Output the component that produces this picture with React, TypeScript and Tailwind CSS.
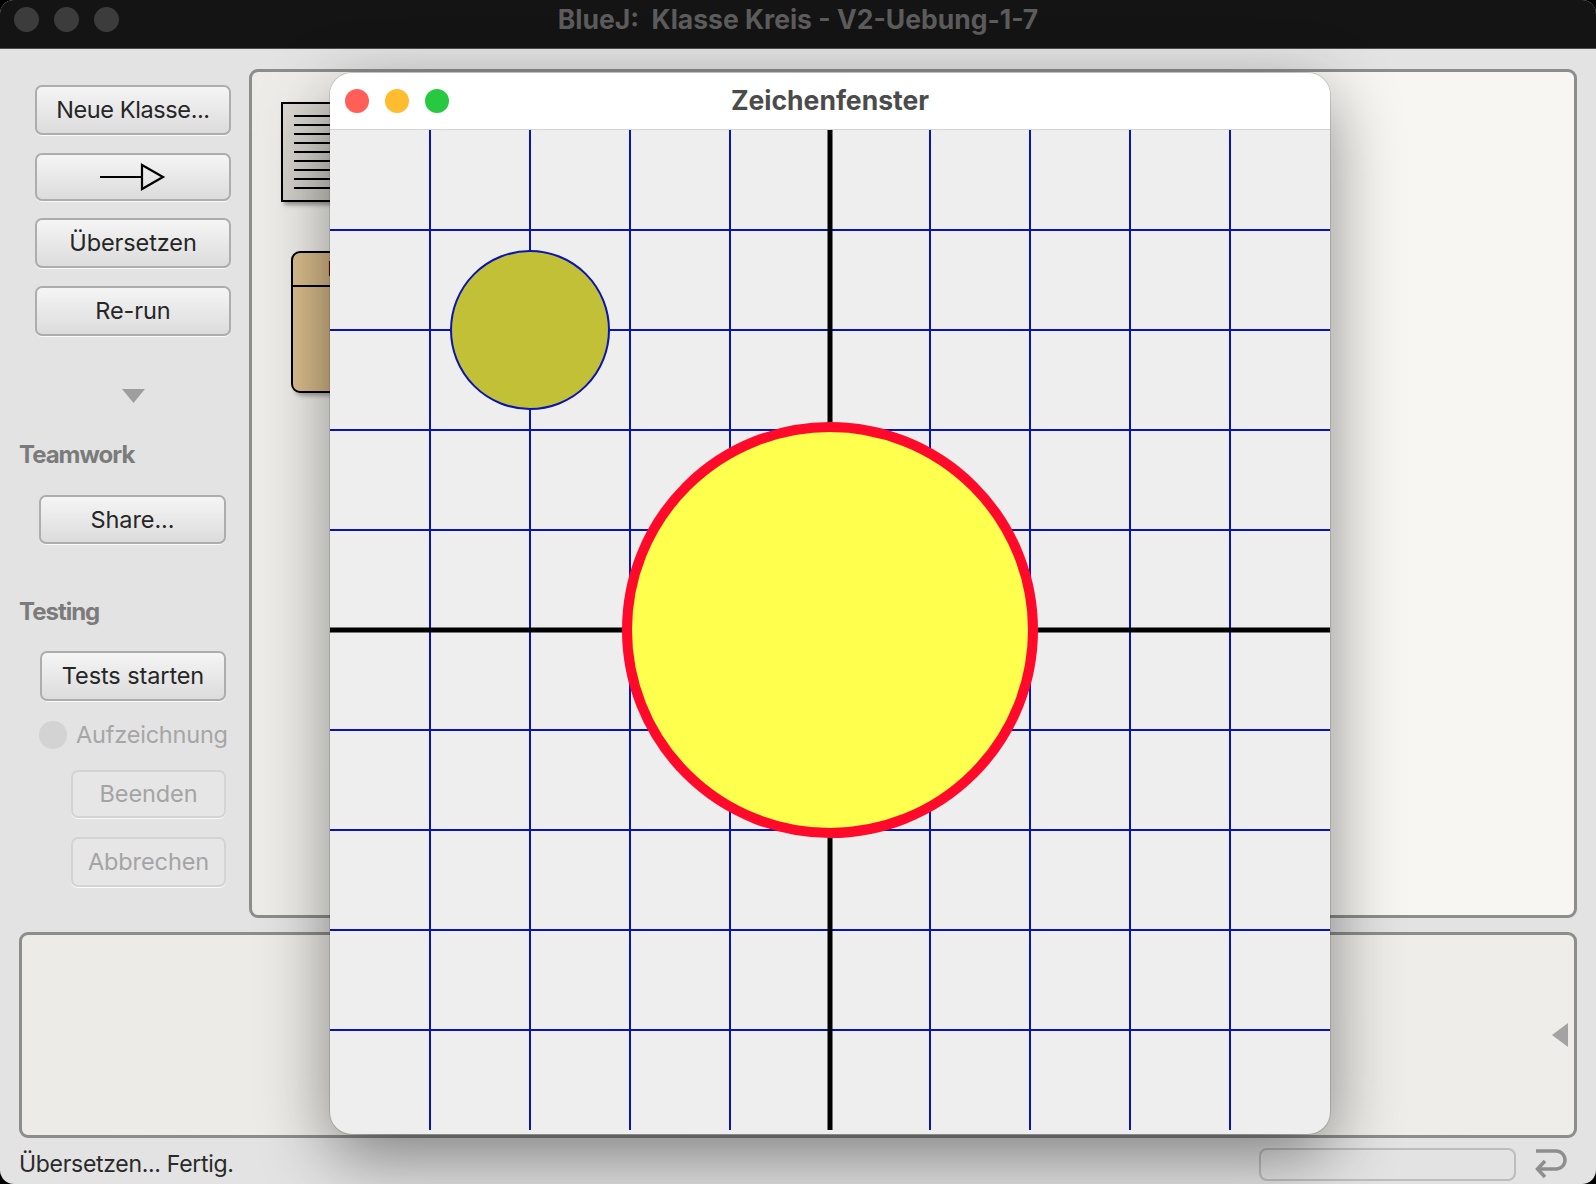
import React from "react";

function Btn({
  children,
  className,
  disabled,
}: {
  children: React.ReactNode;
  className: string;
  disabled?: boolean;
}) {
  const base =
    "flex items-center justify-center rounded-[7px] border-2 text-[23.5px] leading-none tracking-[-0.1px] shadow-[0_1px_0_rgba(255,255,255,0.8)] ";
  const look = disabled
    ? "border-[#d3d3d3] text-[#a4a4a4] bg-[#e6e6e6] "
    : "border-[#adadad] text-[#262626] bg-gradient-to-b from-[#f5f5f5] to-[#dcdcdc] ";
  return <div className={base + look + className}>{children}</div>;
}

const gridLines = [100, 200, 300, 400, 600, 700, 800, 900];

export default function App() {
  return (
    <div className="relative w-[1596px] h-[1184px] bg-black overflow-hidden font-['Inter','Noto_Sans',sans-serif]">
      <div className="flex flex-col w-full h-full bg-[#e3e3e3] rounded-[14px] overflow-hidden">
        {/* Title bar */}
        <div className="grid grid-cols-[1fr_auto_1fr] h-[49px] shrink-0 bg-[#141414] border-b border-[#4d4d4d]">
          <div className="flex gap-[15px] pl-[14px] pt-[7px]">
            <span className="w-[25px] h-[25px] rounded-full bg-[#3c3c3c]" />
            <span className="w-[25px] h-[25px] rounded-full bg-[#3c3c3c]" />
            <span className="w-[25px] h-[25px] rounded-full bg-[#3c3c3c]" />
          </div>
          <div className="pt-[4px] text-[26.5px] leading-[30px] font-bold text-[#5c5c5c] whitespace-pre tracking-[0px]">
            {"BlueJ:  Klasse Kreis - V2-Uebung-1-7"}
          </div>
          <div />
        </div>

        {/* Top row */}
        <div className="flex h-[869px] shrink-0 pt-[20px]">
          {/* Sidebar */}
          <div className="w-[249px] shrink-0 flex flex-col -mt-[20px] pt-[36px]">
            <Btn className="ml-[35px] w-[196px] h-[50px] tracking-[-0.4px]">Neue Klasse...</Btn>
            <Btn className="ml-[35px] w-[196px] h-[48px] mt-[18px]">
              <svg width="66" height="28" viewBox="0 0 66 28">
                <line x1="0" y1="14" x2="42" y2="14" stroke="#000" strokeWidth="2.2" />
                <polygon points="42,2 63,14 42,26" fill="none" stroke="#000" strokeWidth="2.2" />
              </svg>
            </Btn>
            <Btn className="ml-[35px] w-[196px] h-[50px] mt-[17px]">Übersetzen</Btn>
            <Btn className="ml-[35px] w-[196px] h-[50px] mt-[18px]">Re-run</Btn>
            <div className="ml-[122px] mt-[53px] w-[23px] h-[14px]">
              <svg width="23" height="14" viewBox="0 0 23 14">
                <polygon points="0,0 23,0 11.5,14" fill="#9e9e9e" />
              </svg>
            </div>
            <div className="ml-[19px] mt-[38px] h-[28px] leading-[28px] text-[24px] font-bold text-[#7b7b7b] tracking-[-1px]">
              Teamwork
            </div>
            <Btn className="ml-[39px] w-[187px] h-[49px] mt-[26px]">Share...</Btn>
            <div className="ml-[19px] mt-[54px] h-[28px] leading-[28px] text-[24px] font-bold text-[#7b7b7b] tracking-[-1px]">
              Testing
            </div>
            <Btn className="ml-[40px] w-[186px] h-[50px] mt-[25px]">Tests starten</Btn>
            <div className="ml-[39px] mt-[20px] h-[28px] flex items-center gap-[9px]">
              <span className="w-[28px] h-[28px] rounded-full bg-[#d3d3d3]" />
              <span className="text-[23.5px] text-[#a6a6a6] tracking-[-0.2px]">Aufzeichnung</span>
            </div>
            <Btn disabled className="ml-[71px] w-[155px] h-[48px] mt-[21px]">Beenden</Btn>
            <Btn disabled className="ml-[71px] w-[155px] h-[50px] mt-[19px]">Abbrechen</Btn>
          </div>

          {/* Class diagram panel */}
          <div className="relative flex-1 mr-[19px] h-[849px] rounded-[9px] border-[3px] border-[#8d8d8d] bg-[linear-gradient(90deg,#ecebe7,#f7f6f2_140px)]">
            {/* readme note */}
            <div className="absolute left-[29px] top-[30px] w-[80px] h-[100px] border-2 border-black bg-gradient-to-br from-[#dcdad3] to-[#c9c7c0] shadow-[3px_3px_4px_rgba(0,0,0,0.35)] flex flex-col gap-[7.5px] pt-[11px] pl-[11px] pr-[10px]">
              {Array.from({ length: 9 }).map((_, i) => (
                <div key={i} className="h-[1.5px] bg-black" />
              ))}
            </div>
            {/* class box */}
            <div className="absolute left-[39px] top-[179px] w-[124px] h-[142px] rounded-[9px] border-2 border-black bg-gradient-to-r from-[#dcc08f] to-[#c8a979] shadow-[3px_3px_4px_rgba(0,0,0,0.3)] overflow-hidden">
              <div className="h-[34px] border-b-2 border-black flex items-center justify-center text-[20px] font-bold text-black">
                Kreis
              </div>
            </div>
          </div>
        </div>

        {/* Bottom panel */}
        <div className="mx-[19px] mt-[14px] h-[206px] shrink-0 rounded-[9px] border-[3px] border-[#8d8d8d] bg-[linear-gradient(90deg,#ecebe7,#eeede9)] flex items-center justify-end pr-[6px]">
          <svg width="16" height="24" viewBox="0 0 16 24">
            <polygon points="16,0 16,24 0,12" fill="#a3a3a3" />
          </svg>
        </div>

        {/* Status bar */}
        <div className="flex-1 flex items-center pt-[6px] pl-[19px] pr-[28px]">
          <span className="text-[23px] text-[#2a2a2a] tracking-[-0.3px]">Übersetzen... Fertig.</span>
          <div className="ml-auto w-[257px] h-[33px] rounded-[8px] border-2 border-[#bdbdbd]" />
          <svg className="ml-[18px]" width="34" height="32" viewBox="0 0 34 32">
            <path d="M2 3 H22 A9 9 0 0 1 22 21 H4" fill="none" stroke="#8e8e8e" strokeWidth="3.5" />
            <path d="M11 13 L3.5 21 L11 29" fill="none" stroke="#8e8e8e" strokeWidth="3.5" />
          </svg>
        </div>
      </div>

      {/* Zeichenfenster window */}
      <div className="absolute left-[330px] top-[73px] w-[1000px] h-[1061px] rounded-[22px] bg-[#eeeeee] overflow-hidden shadow-[0_22px_70px_rgba(0,0,0,0.45),0_0_0_1px_rgba(0,0,0,0.12)]">
        <div className="grid grid-cols-[1fr_auto_1fr] items-center h-[57px] bg-white border-b border-[#d3d3d3]">
          <div className="flex gap-[16px] pl-[15px]">
            <span className="w-[24px] h-[24px] rounded-full bg-[#ff5f57]" />
            <span className="w-[24px] h-[24px] rounded-full bg-[#febc2e]" />
            <span className="w-[24px] h-[24px] rounded-full bg-[#28c840]" />
          </div>
          <div className="text-[26.5px] font-bold text-[#4b4b4b] tracking-[0px]">Zeichenfenster</div>
          <div />
        </div>
        <svg width="1000" height="1000" viewBox="0 0 1000 1000" className="block">
          {gridLines.map((v) => (
            <line key={"v" + v} x1={v} y1={0} x2={v} y2={1000} stroke="#0a14b4" strokeWidth={2} />
          ))}
          {gridLines.map((v) => (
            <line key={"h" + v} x1={0} y1={v} x2={1000} y2={v} stroke="#0a14b4" strokeWidth={2} />
          ))}
          <line x1={500} y1={0} x2={500} y2={1000} stroke="#000" strokeWidth={5} />
          <line x1={0} y1={500} x2={1000} y2={500} stroke="#000" strokeWidth={5} />
          <circle cx={200} cy={200} r={79} fill="#c1c036" stroke="#0a14b4" strokeWidth={2} />
          <circle cx={500} cy={500} r={203} fill="#ffff4d" stroke="#ff0a2a" strokeWidth={10} />
        </svg>
      </div>
    </div>
  );
}
